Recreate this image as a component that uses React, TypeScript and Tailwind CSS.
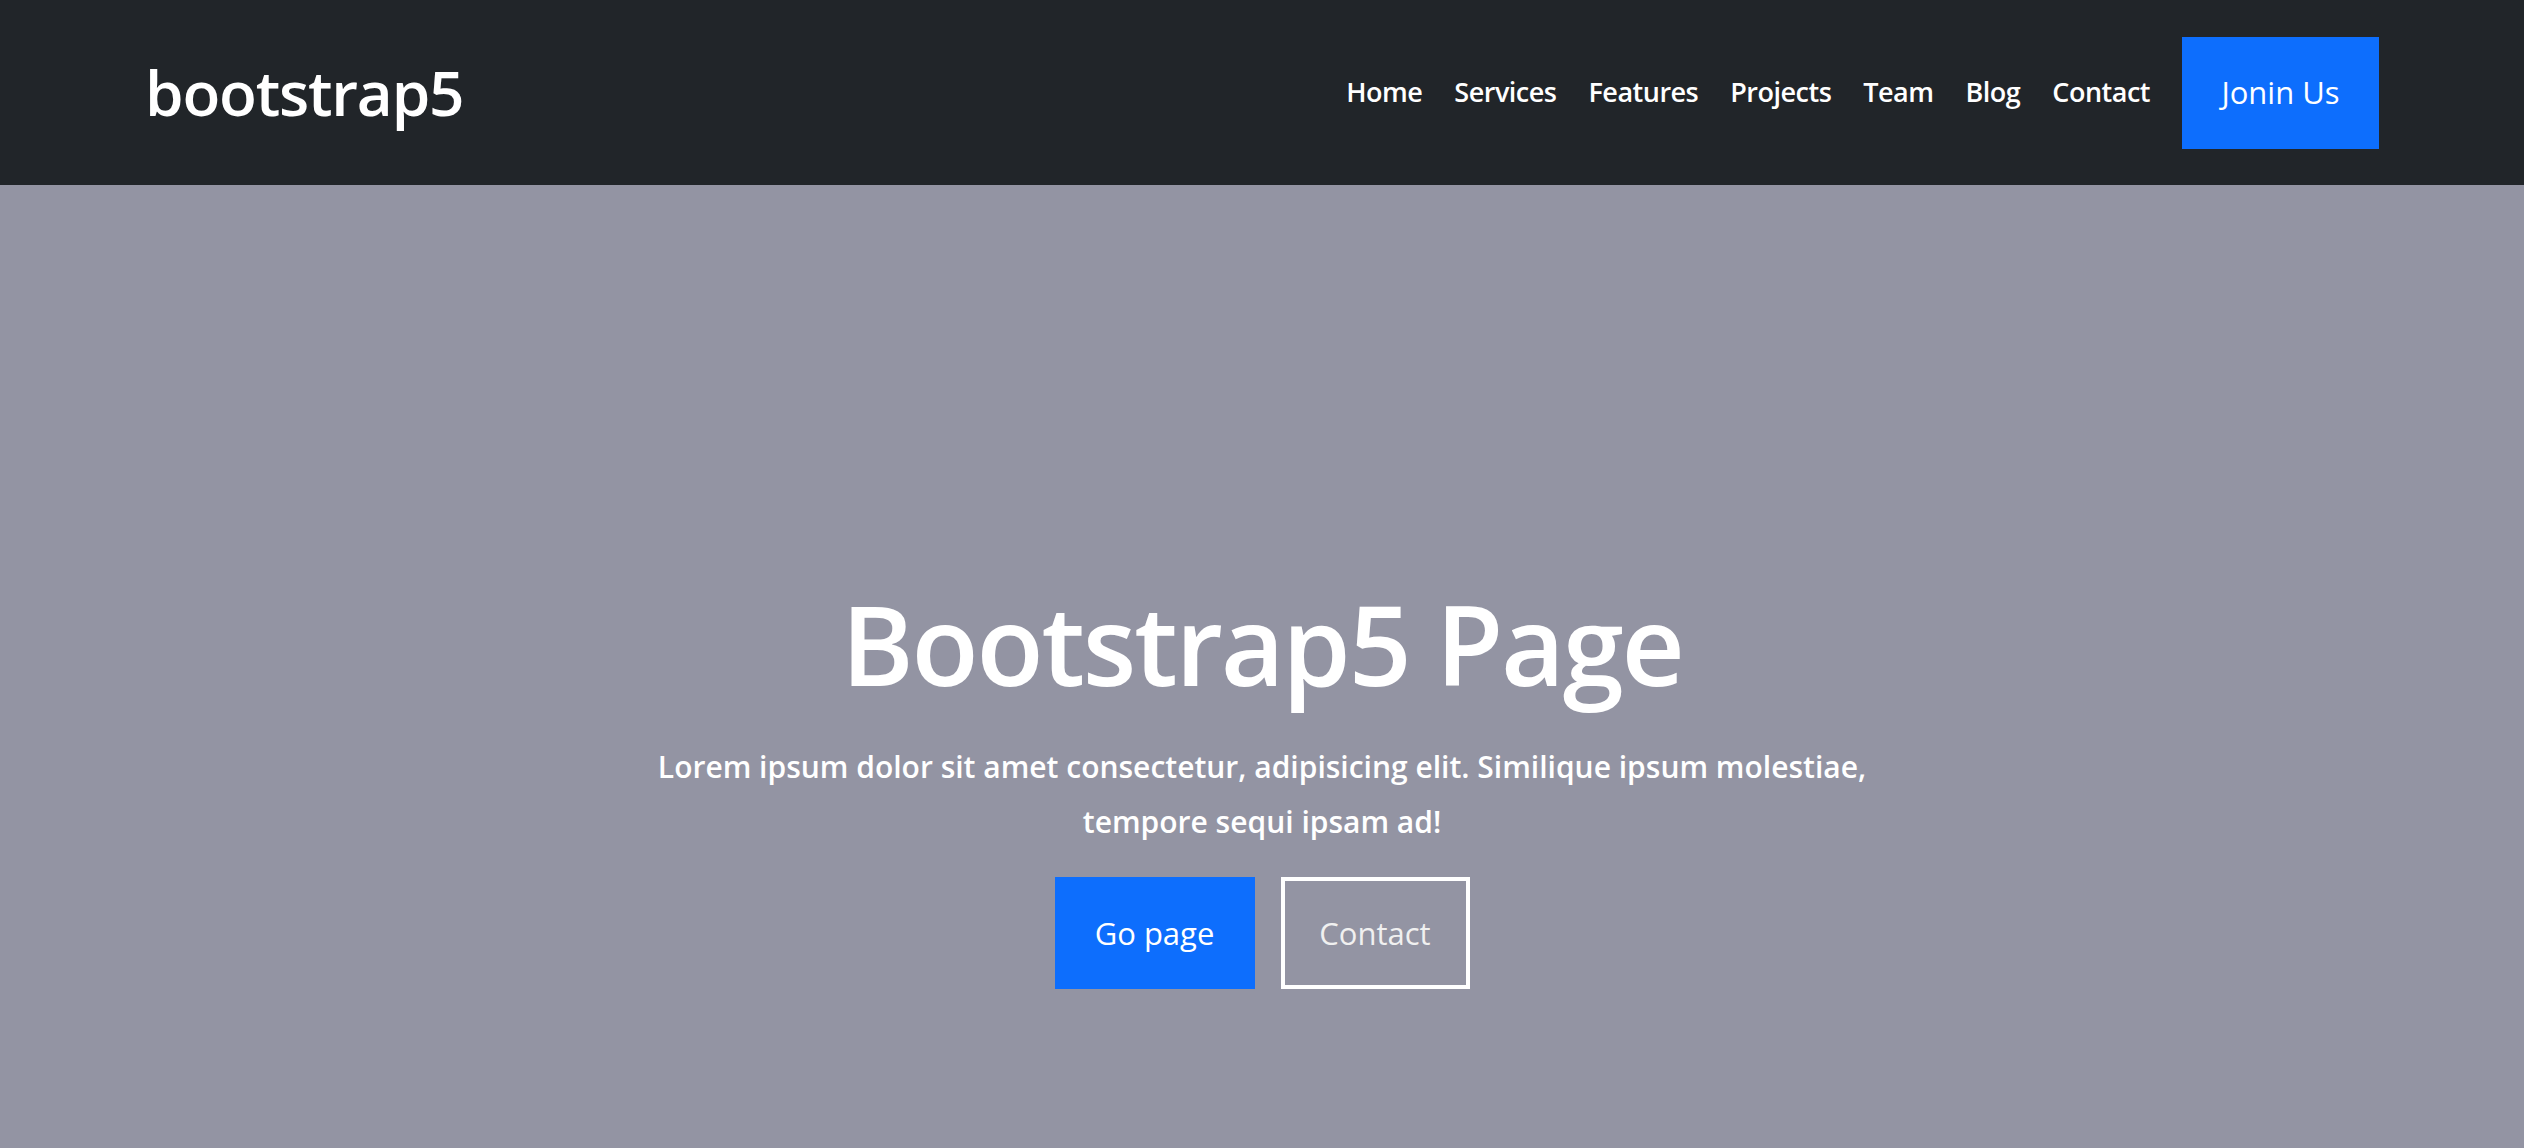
export default function App() {
  const links = ["Home", "Services", "Features", "Projects", "Team", "Blog", "Contact"];

  return (
    <div className="min-h-screen bg-[#9394a3] font-['Open_Sans',sans-serif]">
      <nav className="h-[185px] bg-[#212529] flex items-center justify-between px-[145px]">
        <a className="text-white text-[62px] font-semibold tracking-[-1.2px]">bootstrap5</a>
        <div className="flex items-center">
          <ul className="flex items-center gap-[32px]">
            {links.map((l) => (
              <li key={l} className="text-white text-[27px] font-semibold tracking-[-0.5px]">{l}</li>
            ))}
          </ul>
          <button className="ml-[32px] w-[197px] h-[112px] bg-[#0d6efd] text-white text-[31px]">Jonin Us</button>
        </div>
      </nav>

      <section className="flex flex-col items-center text-center text-white pt-[392px] pb-[160px]">
        <h1 className="text-[110px] font-semibold leading-[1.2] tracking-[-2.2px]">Bootstrap5 Page</h1>
        <p className="mt-[30px] text-[30px] font-semibold leading-[55px] max-w-[1280px]">
          Lorem ipsum dolor sit amet consectetur, adipisicing elit. Similique ipsum molestiae, tempore sequi ipsam ad!
        </p>
        <div className="flex gap-[26px] mt-[28px]">
          <button className="w-[200px] h-[112px] bg-[#0d6efd] text-white text-[31px]">Go page</button>
          <button className="w-[189px] h-[112px] border-4 border-white text-[#f0f0f0] text-[31px]">Contact</button>
        </div>
      </section>
    </div>
  );
}
